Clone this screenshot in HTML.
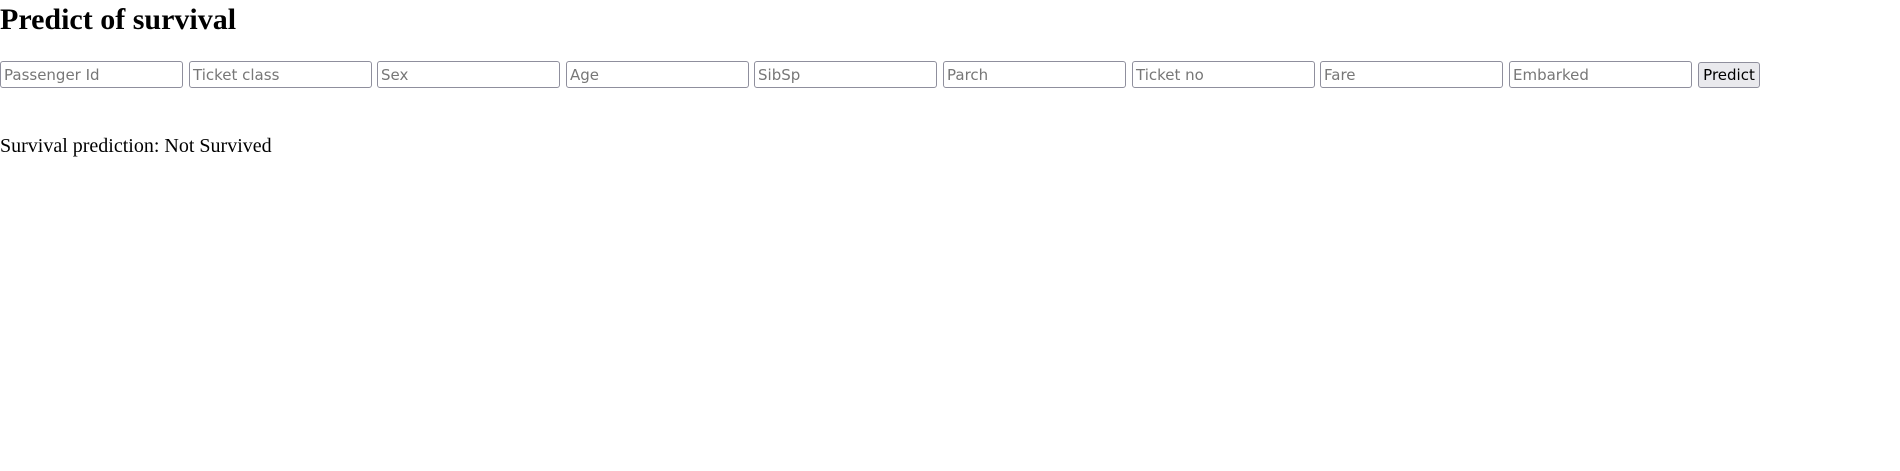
<!DOCTYPE html>
<html><head><meta charset="utf-8"><style>
html,body{margin:0;padding:0;background:#fff;width:1900px;height:471px;overflow:hidden;}
h1{position:absolute;left:0;top:0;margin:0;font:bold 30px "Liberation Serif",serif;line-height:40px;color:#000;}
.in{position:absolute;top:61px;height:27px;width:183px;box-sizing:border-box;border:1px solid #8f8f9d;border-radius:3px;font:15px "DejaVu Sans","Liberation Sans",sans-serif;color:#777;padding:3px 3px 1px;line-height:21px;white-space:nowrap;overflow:hidden;}
.btn{position:absolute;top:62px;left:1698px;width:62px;height:26px;box-sizing:border-box;border:1px solid #8f8f9d;border-radius:3px;background:#e9e9ed;font:15px "DejaVu Sans",sans-serif;color:#000;text-align:center;line-height:24px;}
p{position:absolute;left:0;top:133px;margin:0;font:20px "Liberation Serif",serif;line-height:26px;}
</style></head><body>
<h1>Predict of survival</h1>
<div class="in" style="left:0">Passenger Id</div>
<div class="in" style="left:189px">Ticket class</div>
<div class="in" style="left:377px">Sex</div>
<div class="in" style="left:566px">Age</div>
<div class="in" style="left:754px">SibSp</div>
<div class="in" style="left:943px">Parch</div>
<div class="in" style="left:1132px">Ticket no</div>
<div class="in" style="left:1320px">Fare</div>
<div class="in" style="left:1509px">Embarked</div>
<div class="btn">Predict</div>
<p>Survival prediction: Not Survived</p>
</body></html>
